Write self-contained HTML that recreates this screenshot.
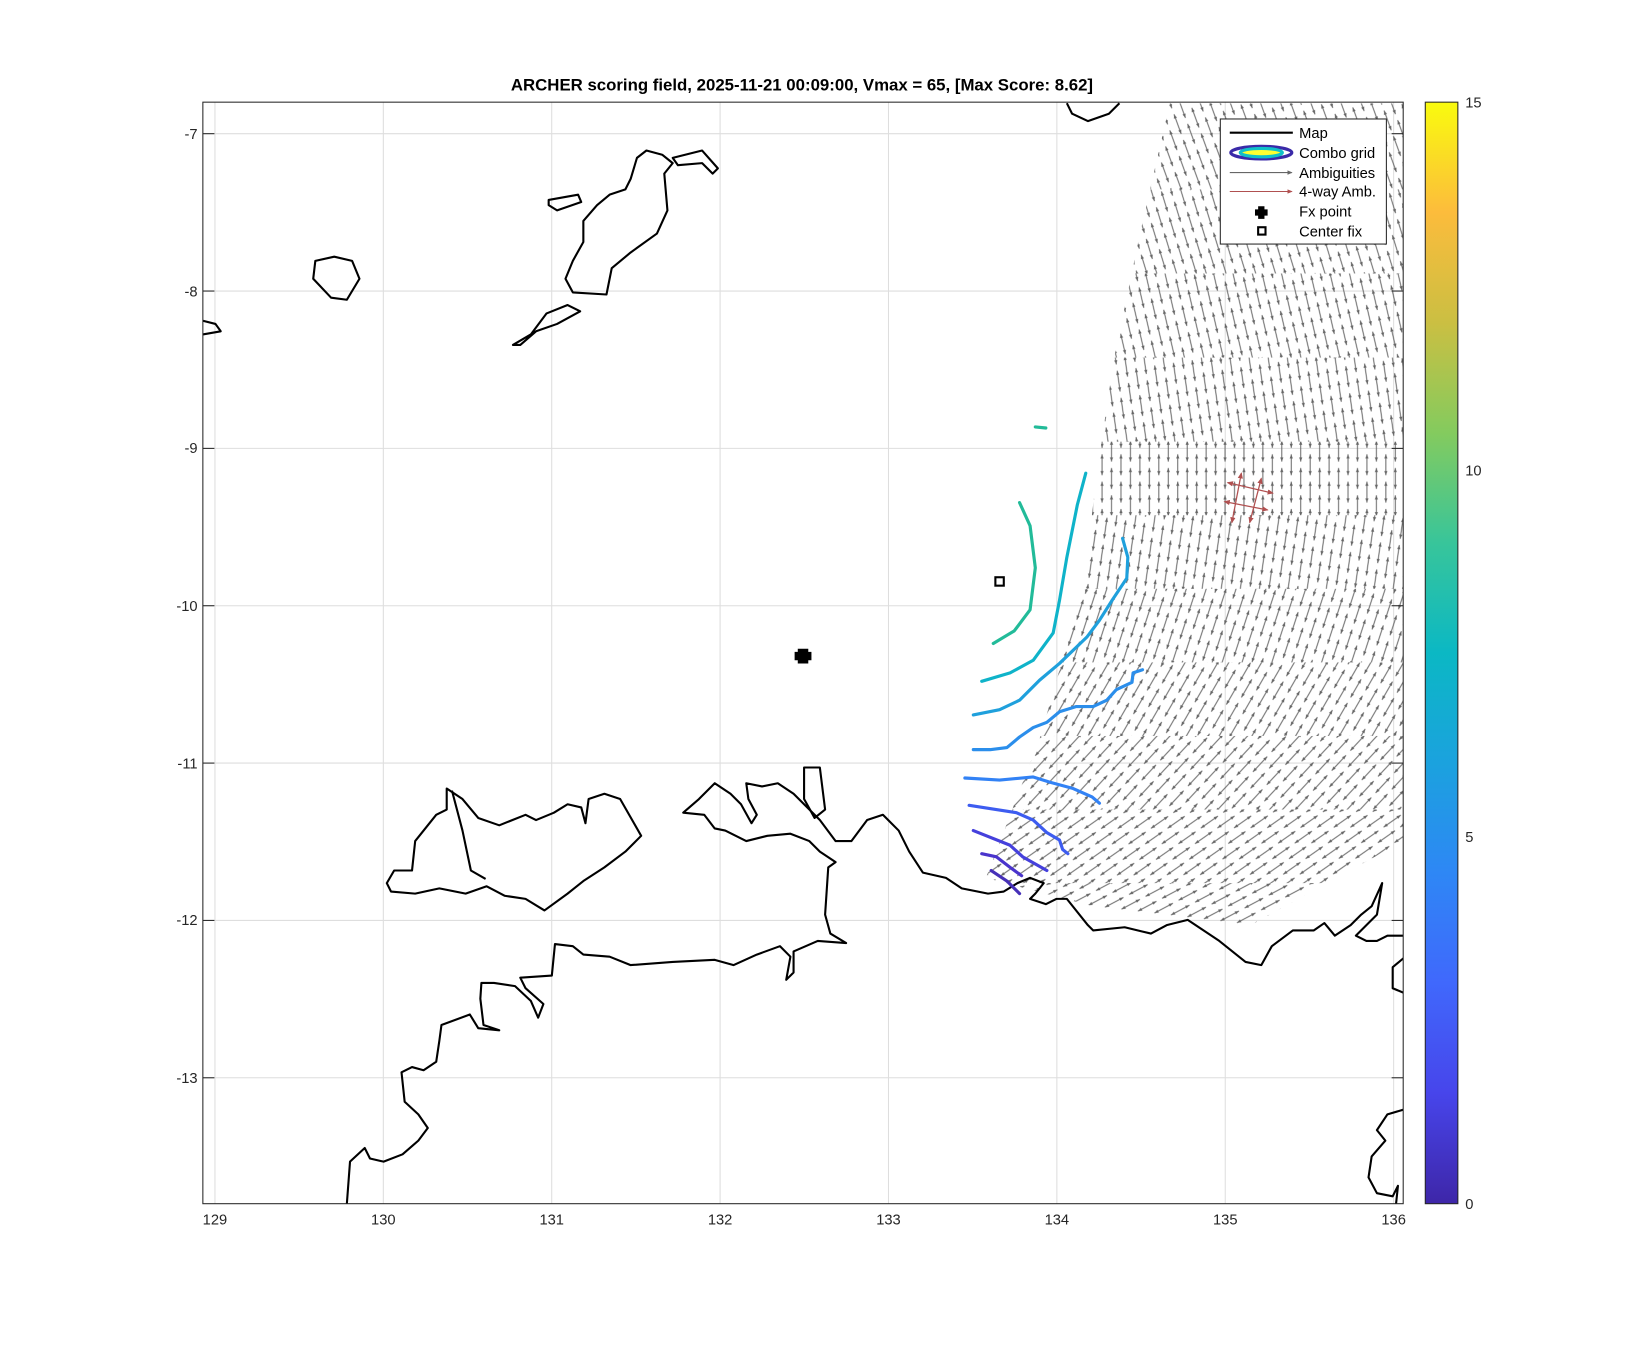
<!DOCTYPE html>
<html><head><meta charset="utf-8"><style>html,body{margin:0;padding:0;background:#fff}svg{display:block}</style></head>
<body>
<svg width="1646" height="1350" viewBox="0 0 1566 1284" xmlns="http://www.w3.org/2000/svg" font-family="Liberation Sans, sans-serif">
<defs>
<linearGradient id="par" x1="0" y1="1" x2="0" y2="0">
<stop offset="0" stop-color="#3e26a8"/><stop offset="0.1" stop-color="#4745eb"/><stop offset="0.2" stop-color="#4068fc"/><stop offset="0.3" stop-color="#2e87f5"/><stop offset="0.4" stop-color="#1ba2de"/><stop offset="0.5" stop-color="#0bb8c4"/><stop offset="0.6" stop-color="#38c59a"/><stop offset="0.7" stop-color="#84cb5e"/><stop offset="0.8" stop-color="#cbbf42"/><stop offset="0.9" stop-color="#fcbc3c"/><stop offset="1" stop-color="#f9fb0e"/>
</linearGradient>
<marker id="ah" viewBox="0 0 6 6" refX="5" refY="3" markerWidth="5" markerHeight="5" orient="auto-start-reverse"><path d="M0,0.5 L6,3 L0,5.5 z" fill="#666"/></marker>
<marker id="rh" viewBox="0 0 6 6" refX="5" refY="3" markerWidth="5" markerHeight="5" orient="auto-start-reverse"><path d="M0,0.5 L6,3 L0,5.5 z" fill="#b05050"/></marker>
<g id="arr" stroke="#666" stroke-width="1" fill="#666">
<line x1="3" y1="4.5" x2="23" y2="4.5"/><path d="M3,4.5 L7,3 L7,6 Z M23,4.5 L19,3 L19,6 Z" stroke="none"/>
<line x1="16" y1="13.5" x2="36" y2="13.5"/><path d="M16,13.5 L20,12 L20,15 Z M36,13.5 L32,12 L32,15 Z" stroke="none"/>
<line x1="-10" y1="13.5" x2="10" y2="13.5"/><path d="M-10,13.5 L-6,12 L-6,15 Z M10,13.5 L6,12 L6,15 Z" stroke="none"/>
</g>
<pattern id="p1" width="26" height="18" patternUnits="userSpaceOnUse" patternTransform="rotate(70)"><use href="#arr"/></pattern>
<pattern id="p2" width="26" height="18" patternUnits="userSpaceOnUse" patternTransform="rotate(73)"><use href="#arr"/></pattern>
<pattern id="p3" width="26" height="18" patternUnits="userSpaceOnUse" patternTransform="rotate(77)"><use href="#arr"/></pattern>
<pattern id="p4" width="26" height="18" patternUnits="userSpaceOnUse" patternTransform="rotate(82)"><use href="#arr"/></pattern>
<pattern id="p5" width="26" height="18" patternUnits="userSpaceOnUse" patternTransform="rotate(90)"><use href="#arr"/></pattern>
<pattern id="p6" width="26" height="18" patternUnits="userSpaceOnUse" patternTransform="rotate(98)"><use href="#arr"/></pattern>
<pattern id="p7" width="26" height="18" patternUnits="userSpaceOnUse" patternTransform="rotate(108)"><use href="#arr"/></pattern>
<pattern id="p8" width="26" height="18" patternUnits="userSpaceOnUse" patternTransform="rotate(120)"><use href="#arr"/></pattern>
<pattern id="p9" width="26" height="18" patternUnits="userSpaceOnUse" patternTransform="rotate(133)"><use href="#arr"/></pattern>
<pattern id="p10" width="26" height="18" patternUnits="userSpaceOnUse" patternTransform="rotate(145)"><use href="#arr"/></pattern>
<pattern id="p11" width="26" height="18" patternUnits="userSpaceOnUse" patternTransform="rotate(152)"><use href="#arr"/></pattern>
<clipPath id="fld"><path d="M1113,98 L1335,98 L1335,800 L1190,880 L1040,862 L938,835 L990,700 L1030,560 L1045,440 L1060,340 L1085,220 Z"/></clipPath>
<clipPath id="ax"><rect x="193" y="97" width="1142" height="1048"/></clipPath>
</defs>
<rect width="1566" height="1284" fill="#fff"/>
<g stroke="#dedede" stroke-width="1">
<line x1="204.5" y1="97" x2="204.5" y2="1145"/><line x1="364.7" y1="97" x2="364.7" y2="1145"/><line x1="524.9" y1="97" x2="524.9" y2="1145"/><line x1="685.1" y1="97" x2="685.1" y2="1145"/><line x1="845.3" y1="97" x2="845.3" y2="1145"/><line x1="1005.5" y1="97" x2="1005.5" y2="1145"/><line x1="1165.7" y1="97" x2="1165.7" y2="1145"/><line x1="1325.9" y1="97" x2="1325.9" y2="1145"/>
<line x1="193" y1="127" x2="1335" y2="127"/><line x1="193" y1="276.7" x2="1335" y2="276.7"/><line x1="193" y1="426.4" x2="1335" y2="426.4"/><line x1="193" y1="576.1" x2="1335" y2="576.1"/><line x1="193" y1="725.8" x2="1335" y2="725.8"/><line x1="193" y1="875.5" x2="1335" y2="875.5"/><line x1="193" y1="1025.2" x2="1335" y2="1025.2"/>
</g>
<g clip-path="url(#fld)">
<rect x="900" y="97" width="440" height="83" fill="url(#p1)"/>
<rect x="900" y="180" width="440" height="80" fill="url(#p2)"/>
<rect x="900" y="260" width="440" height="80" fill="url(#p3)"/>
<rect x="900" y="340" width="440" height="80" fill="url(#p4)"/>
<rect x="900" y="420" width="440" height="70" fill="url(#p5)"/>
<rect x="900" y="490" width="440" height="70" fill="url(#p6)"/>
<rect x="900" y="560" width="440" height="70" fill="url(#p7)"/>
<rect x="900" y="630" width="440" height="70" fill="url(#p8)"/>
<rect x="900" y="700" width="440" height="70" fill="url(#p9)"/>
<rect x="900" y="770" width="440" height="70" fill="url(#p10)"/>
<rect x="900" y="840" width="440" height="60" fill="url(#p11)"/>
</g>
<g stroke="#b05050" stroke-width="1.2" marker-start="url(#rh)" marker-end="url(#rh)">
<line x1="1168" y1="459" x2="1211" y2="469"/><line x1="1165" y1="477" x2="1206" y2="485"/><line x1="1181" y1="450" x2="1172" y2="497"/><line x1="1200" y1="455" x2="1189" y2="497"/>
</g>
<g clip-path="url(#ax)" fill="none" stroke="#000" stroke-width="2" stroke-linejoin="round">
<path d="M606,150 L615,143 L630,147 L640,155 L632,165 L635,200 L625,222 L600,240 L582,255 L577,280 L545,278 L538,265 L545,248 L555,230 L555,210 L568,195 L580,185 L595,180 L600,170 Z"/>
<path d="M640,150 L668,143 L683,160 L678,165 L668,155 L645,157 Z"/>
<path d="M522,190 L550,185 L553,192 L530,200 L522,195 Z"/>
<path d="M300,248 L318,244 L335,248 L342,265 L330,285 L315,283 L298,265 Z"/>
<path d="M488,328 L505,318 L520,298 L540,290 L552,296 L530,308 L510,315 L495,328 Z"/>
<path d="M193,305 L205,308 L210,315 L193,318"/>
<path d="M1015,98 L1020,108 L1035,115 L1055,108 L1065,98"/>
<path d="M425,750 L440,760 L455,778 L475,785 L500,775 L510,780 L527,773 L540,765 L553,768 L557,783 L560,760 L575,755 L590,760 L610,795 L595,810 L575,825 L555,838 L540,850 L518,866 L500,855 L480,852 L463,843 L443,850 L418,845 L395,850 L372,848 L368,840 L375,828 L392,828 L395,800 L415,775 L425,770 Z"/>
<path d="M430,752 L440,790 L448,828 L462,836"/>
<path d="M765,730 L780,730 L785,770 L775,778 L765,760 Z"/>
<path d="M330,1145 L333,1105 L347,1092 L352,1102 L365,1105 L383,1098 L398,1085 L407,1073 L398,1060 L385,1048 L382,1020 L392,1015 L403,1018 L415,1010 L418,990 L420,975 L447,965 L455,978 L475,980 L460,975 L457,950 L458,935 L470,935 L490,938 L505,952 L512,968 L517,955 L500,940 L495,930 L525,928 L528,898 L545,900 L555,908 L580,910 L600,918 L640,915 L680,913 L698,918 L720,908 L742,900 L752,910 L748,932 L755,925 L755,905 L778,895 L805,897 L790,888 L785,870 L788,825 L795,820 L780,810 L770,800 L752,793 L730,795 L710,800 L690,790 L680,788 L670,775 L650,773 L665,760 L680,745 L695,755 L705,765 L715,783 L720,775 L712,760 L710,745 L725,748 L740,745 L755,755 L770,770 L780,780 L795,800 L810,800 L825,780 L840,775 L855,790 L865,810 L878,830 L900,835 L915,845 L940,850 L955,848 L968,840 L980,835 L993,840 L985,850 L980,855 L995,860 L1005,855 L1015,855 L1035,880 L1040,885 L1070,882 L1095,888 L1110,880 L1130,875 L1160,895 L1185,915 L1200,918 L1210,900 L1230,885 L1250,885 L1260,878 L1270,890 L1285,880 L1295,870 L1305,862 L1315,840 L1310,870 L1300,880 L1290,890 L1300,895 L1310,895 L1320,890 L1337,890"/>
<path d="M1337,910 L1325,920 L1325,940 L1337,945"/>
<path d="M1337,1055 L1320,1060 L1310,1075 L1318,1085 L1305,1100 L1302,1120 L1310,1135 L1325,1138 L1330,1128 L1328,1147"/>
</g>
<g fill="none" stroke-width="3" stroke-linecap="round" stroke-linejoin="round">
<path stroke="#22bb99" d="M970,478 L980,500 L985,540 L980,580 L965,600 L945,612"/>
<path stroke="#22bb99" d="M985,406 L995,407"/>
<path stroke="#0fb3c9" d="M1033,450 L1025,480 L1015,530 L1008,571 L1002,602 L983,628 L961,640 L934,648"/>
<path stroke="#1fa0dc" d="M1068,512 L1073,530 L1072,550 L1058,571 L1046,590 L1034,606 L1008,631 L989,647 L970,666 L951,675 L926,680"/>
<path stroke="#2b8eeb" d="M1087,637 L1078,640 L1077,649 L1062,656 L1053,666 L1040,672 L1024,672 L1008,677 L996,687 L983,692 L970,701 L958,711 L942,713 L926,713"/>
<path stroke="#3282f5" d="M918,740 L951,742 L983,739 L999,744 L1021,750 L1039,758 L1046,764"/>
<path stroke="#3d5cf0" d="M922,766 L967,773 L983,780 L996,792 L1008,799 L1011,808 L1016,812"/>
<path stroke="#4540dc" d="M926,790 L961,804 L973,815 L996,828"/>
<path stroke="#4a34cc" d="M934,812 L948,815 L961,825 L972,833"/>
<path stroke="#4630b8" d="M943,828 L958,838 L970,850"/>
</g>
<path d="M759,617 h10 v3 h3 v8 h-3 v3 h-10 v-3 h-3 v-8 h3 z" fill="#000"/>
<rect x="947" y="549" width="8" height="8" fill="none" stroke="#000" stroke-width="2"/>
<rect x="193" y="97" width="1142" height="1048" fill="none" stroke="#262626" stroke-width="1"/>
<g stroke="#262626" stroke-width="1">
<line x1="193" y1="127" x2="204" y2="127"/><line x1="193" y1="276.7" x2="204" y2="276.7"/><line x1="193" y1="426.4" x2="204" y2="426.4"/><line x1="193" y1="576.1" x2="204" y2="576.1"/><line x1="193" y1="725.8" x2="204" y2="725.8"/><line x1="193" y1="875.5" x2="204" y2="875.5"/><line x1="193" y1="1025.2" x2="204" y2="1025.2"/>
<line x1="1324" y1="127" x2="1335" y2="127"/><line x1="1324" y1="276.7" x2="1335" y2="276.7"/><line x1="1324" y1="426.4" x2="1335" y2="426.4"/><line x1="1324" y1="576.1" x2="1335" y2="576.1"/><line x1="1324" y1="725.8" x2="1335" y2="725.8"/><line x1="1324" y1="875.5" x2="1335" y2="875.5"/><line x1="1324" y1="1025.2" x2="1335" y2="1025.2"/>
</g>
<g font-size="14" fill="#262626">
<text x="204.5" y="1165" text-anchor="middle">129</text><text x="364.7" y="1165" text-anchor="middle">130</text><text x="524.9" y="1165" text-anchor="middle">131</text><text x="685.1" y="1165" text-anchor="middle">132</text><text x="845.3" y="1165" text-anchor="middle">133</text><text x="1005.5" y="1165" text-anchor="middle">134</text><text x="1165.7" y="1165" text-anchor="middle">135</text><text x="1325.9" y="1165" text-anchor="middle">136</text>
<g text-anchor="end"><text x="188" y="132">-7</text><text x="188" y="282">-8</text><text x="188" y="431">-9</text><text x="188" y="581">-10</text><text x="188" y="731">-11</text><text x="188" y="880">-12</text><text x="188" y="1030">-13</text></g>
<text x="1394" y="102">15</text><text x="1394" y="452">10</text><text x="1394" y="801">5</text><text x="1394" y="1150">0</text>
</g>
<text x="763" y="86" font-size="16" font-weight="bold" text-anchor="middle" fill="#000">ARCHER scoring field, 2025-11-21 00:09:00, Vmax = 65, [Max Score: 8.62]</text>
<rect x="1356" y="97" width="31" height="1048" fill="url(#par)" stroke="#262626" stroke-width="1"/>
<g>
<rect x="1161" y="113" width="158" height="119" fill="#fff" stroke="#262626" stroke-width="1"/>
<line x1="1170" y1="126" x2="1230" y2="126" stroke="#000" stroke-width="2"/>
<ellipse cx="1200" cy="145" rx="29" ry="6" fill="none" stroke="#3a2aa8" stroke-width="3"/>
<ellipse cx="1200" cy="145" rx="20" ry="4" fill="#ffff30" stroke="#10c0c8" stroke-width="3"/>
<line x1="1170" y1="164" x2="1229" y2="164" stroke="#666" stroke-width="1" marker-end="url(#ah)"/>
<line x1="1170" y1="182" x2="1229" y2="182" stroke="#b05050" stroke-width="1" marker-end="url(#rh)"/>
<path d="M1197,196 h6 v3 h3 v6 h-3 v3 h-6 v-3 h-3 v-6 h3 z" fill="#000"/>
<rect x="1197" y="216" width="7" height="7" fill="none" stroke="#000" stroke-width="2"/>
<g font-size="14" fill="#000"><text x="1236" y="131">Map</text><text x="1236" y="150">Combo grid</text><text x="1236" y="169">Ambiguities</text><text x="1236" y="187">4-way Amb.</text><text x="1236" y="206">Fx point</text><text x="1236" y="225">Center fix</text></g>
</g>
</svg>
</body></html>
